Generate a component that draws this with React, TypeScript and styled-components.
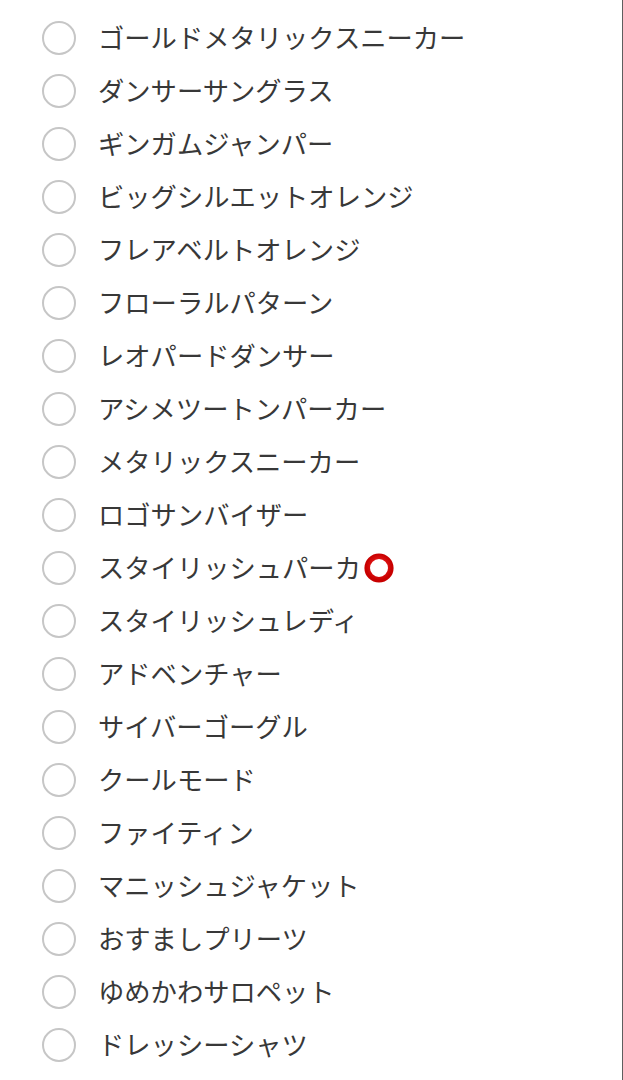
import React from 'react'
import styled, { createGlobalStyle } from 'styled-components'

const GlobalStyle = createGlobalStyle`
  html, body {
    margin: 0;
    padding: 0;
    background: #ffffff;
  }
`

const Page = styled.div`
  box-sizing: border-box;
  width: 100%;
  min-height: 100vh;
  padding: 11px 0 0 42px;
  border-right: 1px solid #5e5e5e;
  background: #ffffff;
  font-family: 'Noto Sans CJK JP', 'Noto Sans', sans-serif;
`

const OptionList = styled.ul`
  list-style: none;
  margin: 0;
  padding: 0;
  display: flex;
  flex-direction: column;
`

const Option = styled.li`
  display: flex;
  align-items: center;
  height: 53px;
  gap: 22px;
`

const Radio = styled.span`
  box-sizing: border-box;
  flex: none;
  width: 34px;
  height: 34px;
  border-radius: 50%;
  border: 2px solid #c6c6c6;
  background: #ffffff;
`

const Label = styled.span`
  display: inline-flex;
  align-items: center;
  font-size: 26.3px;
  line-height: 1;
  color: #383838;
  white-space: nowrap;
`

const Mark = styled.svg`
  margin-left: 3px;
  flex: none;
`

const RedCircle = () => (
  <Mark width="30" height="30" viewBox="0 0 30 30" aria-hidden="true">
    <defs>
      <radialGradient id="ring" cx="50%" cy="45%" r="55%">
        <stop offset="0%" stopColor="#ff3030" />
        <stop offset="100%" stopColor="#c80000" />
      </radialGradient>
    </defs>
    <circle cx="15" cy="15" r="11.8" fill="none" stroke="url(#ring)" strokeWidth="5.6" />
  </Mark>
)

const items: { label: string; mark?: boolean }[] = [
  { label: 'ゴールドメタリックスニーカー' },
  { label: 'ダンサーサングラス' },
  { label: 'ギンガムジャンパー' },
  { label: 'ビッグシルエットオレンジ' },
  { label: 'フレアベルトオレンジ' },
  { label: 'フローラルパターン' },
  { label: 'レオパードダンサー' },
  { label: 'アシメツートンパーカー' },
  { label: 'メタリックスニーカー' },
  { label: 'ロゴサンバイザー' },
  { label: 'スタイリッシュパーカ', mark: true },
  { label: 'スタイリッシュレディ' },
  { label: 'アドベンチャー' },
  { label: 'サイバーゴーグル' },
  { label: 'クールモード' },
  { label: 'ファイティン' },
  { label: 'マニッシュジャケット' },
  { label: 'おすましプリーツ' },
  { label: 'ゆめかわサロペット' },
  { label: 'ドレッシーシャツ' },
]

export default function App() {
  return (
    <Page>
      <GlobalStyle />
      <OptionList>
        {items.map((item) => (
          <Option key={item.label}>
            <Radio />
            <Label>
              {item.label}
              {item.mark && <RedCircle />}
            </Label>
          </Option>
        ))}
      </OptionList>
    </Page>
  )
}
